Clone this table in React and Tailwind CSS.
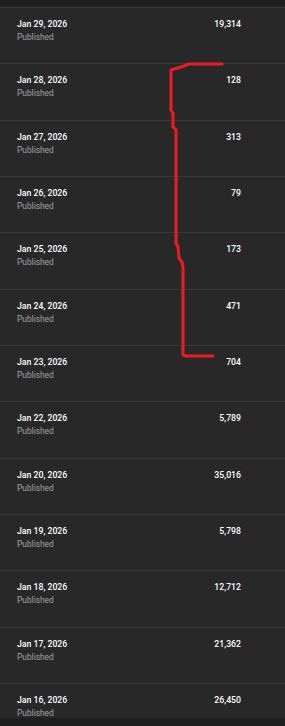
const rows = [
  ["Jan 29, 2026", "19,314"],
  ["Jan 28, 2026", "128"],
  ["Jan 27, 2026", "313"],
  ["Jan 26, 2026", "79"],
  ["Jan 25, 2026", "173"],
  ["Jan 24, 2026", "471"],
  ["Jan 23, 2026", "704"],
  ["Jan 22, 2026", "5,789"],
  ["Jan 20, 2026", "35,016"],
  ["Jan 19, 2026", "5,798"],
  ["Jan 18, 2026", "12,712"],
  ["Jan 17, 2026", "21,362"],
  ["Jan 16, 2026", "26,450"],
];

function Row({ date, views }) {
  return (
    <div className="flex h-[56.33px] shrink-0 items-start justify-between border-t border-[#3a3a3a] pl-[17px] pr-[44px] pt-[10px]">
      <div className="flex flex-col">
        <span className="text-[8.7px] leading-[12px] font-medium text-white">{date}</span>
        <span className="text-[8.4px] leading-[14px] text-[#a3a3a3]">Published</span>
      </div>
      <span className="text-[8.7px] leading-[12px] font-medium text-white">{views}</span>
    </div>
  );
}

export default function App() {
  return (
    <div
      className="relative flex h-[726px] w-[285px] flex-col overflow-hidden bg-[#282828]"
      style={{ fontFamily: "Roboto, Arial, sans-serif" }}
    >
      <div className="h-[7px] shrink-0 bg-[#1f1f1f]" />
      <div className="flex flex-1 flex-col overflow-hidden">
        {rows.map(([d, v]) => (
          <Row key={d} date={d} views={v} />
        ))}
      </div>
      <div className="h-[8px] shrink-0 bg-[#1e1e1e]" />

      <svg
        className="pointer-events-none absolute left-0 top-0"
        width="285"
        height="726"
        viewBox="0 0 285 726"
      >
        <polyline
          points="222,64 189,64 181,67 171,70 171,110 173,113 173,127 176,130 176,243 178,247 179,258 182,262 183,268 183,355 186,356 213,356"
          fill="none"
          stroke="#ec1c24"
          strokeWidth="3"
          strokeLinejoin="round"
          strokeLinecap="round"
        />
      </svg>
    </div>
  );
}
